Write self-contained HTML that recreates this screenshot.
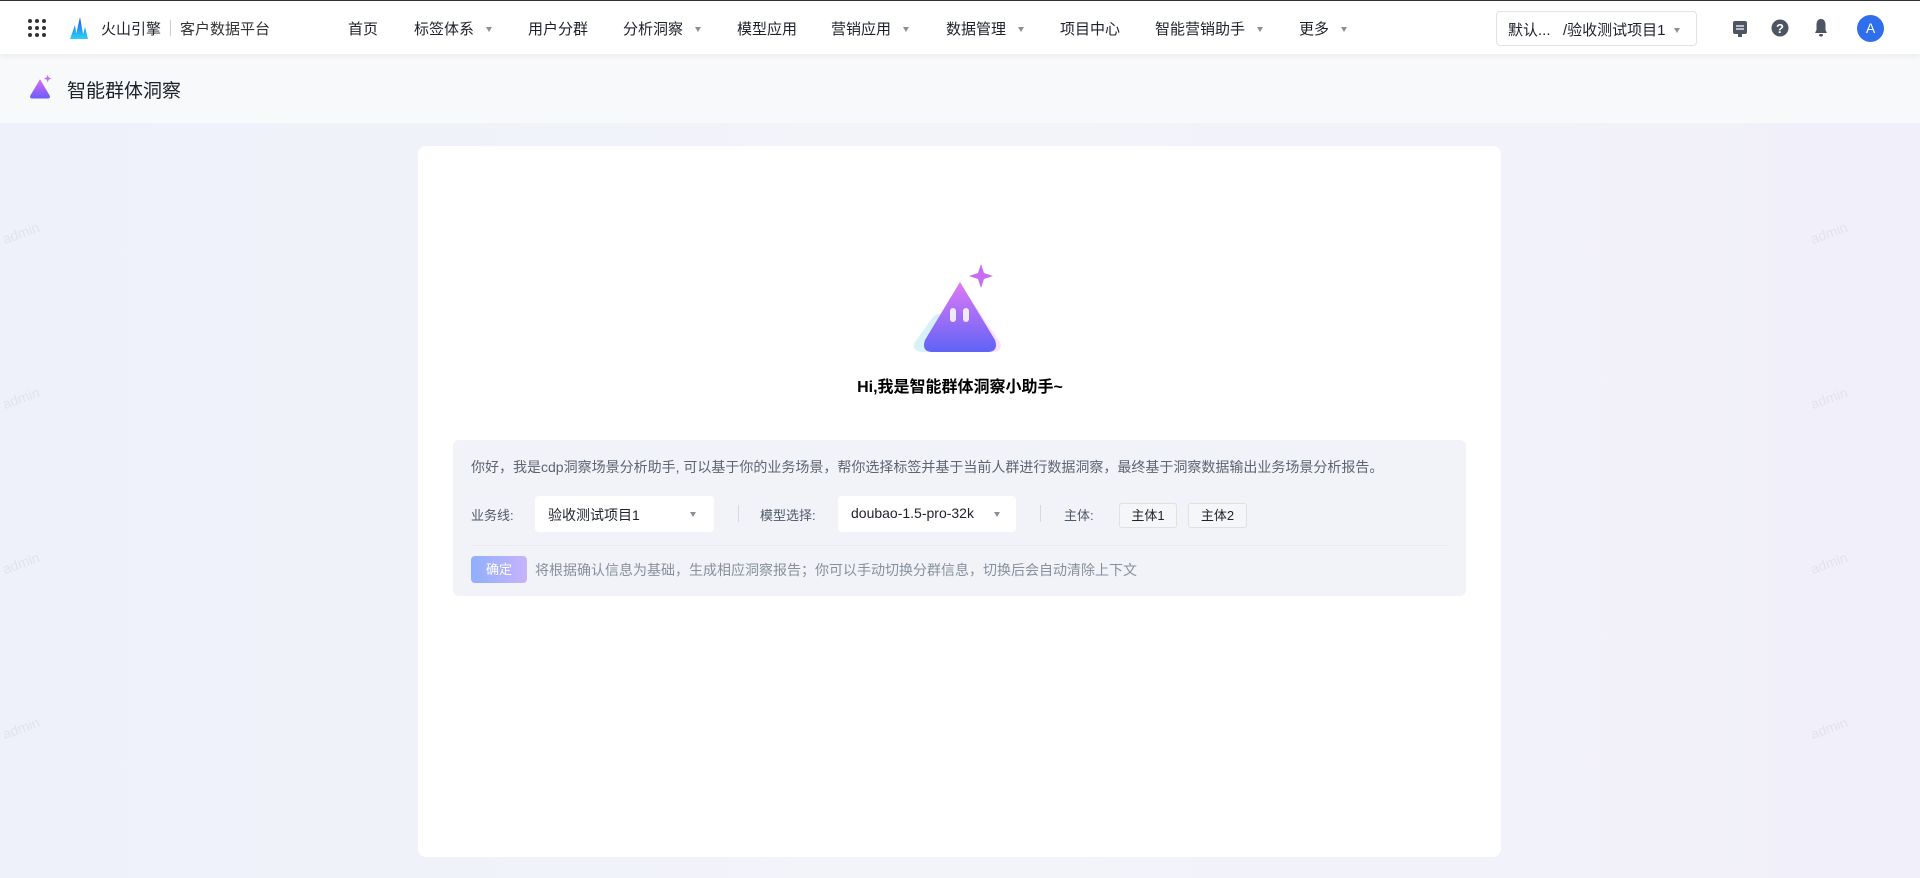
<!DOCTYPE html>
<html><head><meta charset="utf-8"><style>
*{margin:0;padding:0;box-sizing:border-box}
body{width:1920px;height:878px;overflow:hidden;font-family:"Liberation Sans","Noto Sans CJK SC",sans-serif;background:linear-gradient(90deg,#eef1fa,#f3f4fa 50%,#f1f0fa);position:relative;color:#1d2129}
.top{position:absolute;left:0;top:0;width:1920px;height:54px;background:#fff;border-top:1px solid #333;box-shadow:0 2px 6px rgba(0,0,0,.06);z-index:2}
.sub{position:absolute;left:0;top:54px;width:1920px;height:69px;background:#f8f9fb}
.abs{position:absolute;white-space:nowrap}
.nav{font-size:15px;color:#1d2129;top:17px}
.tri{display:inline-block;width:0;height:0;border-left:3.5px solid transparent;border-right:3.5px solid transparent;border-top:5px solid #8a8f99;margin-left:12px;vertical-align:2px}
.card{position:absolute;left:418px;top:146px;width:1083px;height:711px;background:#fff;border-radius:8px}
.box{position:absolute;left:453px;top:440px;width:1013px;height:156px;background:#f2f3f8;border-radius:6px}
.sel{position:absolute;background:#fff;border-radius:4px;height:36px;top:496px;font-size:14px;padding:9px 13px;color:#1d2129}
.lbl{font-size:13px;color:#4e5969;top:505px}
.tag{position:absolute;top:503px;height:25px;border:1px solid #dfe1e6;border-radius:3px;background:#f5f6f8;font-size:13px;line-height:23px;text-align:center}
.wm{position:absolute;color:rgba(0,0,0,.06);font-size:14px;transform:rotate(-20deg)}
</style></head><body>
<div class="top">
 <svg class="abs" style="left:28px;top:18px" width="18" height="18"><g fill="#333"><circle cx="2" cy="2" r="2"/><circle cx="9" cy="2" r="2"/><circle cx="16" cy="2" r="2"/><circle cx="2" cy="9" r="2"/><circle cx="9" cy="9" r="2"/><circle cx="16" cy="9" r="2"/><circle cx="2" cy="16" r="2"/><circle cx="9" cy="16" r="2"/><circle cx="16" cy="16" r="2"/></g></svg>
 <svg class="abs" style="left:70px;top:16px" width="18" height="22"><defs><linearGradient id="lg" x1="0" y1="0" x2="0" y2="1"><stop offset="0" stop-color="#1a55e8"/><stop offset="1" stop-color="#2ed1f5"/></linearGradient></defs><path d="M0 22L5 8 7 22ZM5 22L10 0 14 22ZM12 22L15 10 18 22Z" fill="url(#lg)"/></svg>
 <div class="abs" style="left:101px;top:17px;font-size:15px">火山引擎</div>
 <div class="abs" style="left:170px;top:19px;width:1px;height:16px;background:#ccc"></div>
 <div class="abs" style="left:180px;top:17px;font-size:15px;color:#333">客户数据平台</div>
 <div class="abs nav" style="left:348px">首页</div>
 <div class="abs nav" style="left:414px">标签体系<span class="tri"></span></div>
 <div class="abs nav" style="left:528px">用户分群</div>
 <div class="abs nav" style="left:623px">分析洞察<span class="tri"></span></div>
 <div class="abs nav" style="left:737px">模型应用</div>
 <div class="abs nav" style="left:831px">营销应用<span class="tri"></span></div>
 <div class="abs nav" style="left:946px">数据管理<span class="tri"></span></div>
 <div class="abs nav" style="left:1060px">项目中心</div>
 <div class="abs nav" style="left:1155px">智能营销助手<span class="tri"></span></div>
 <div class="abs nav" style="left:1299px">更多<span class="tri"></span></div>
 <div class="abs" style="left:1496px;top:10px;width:201px;height:35px;border:1px solid #e0e2e7;border-radius:4px;font-size:15px;padding:7px 0 0 11px">默认...&nbsp;&nbsp;&nbsp;/验收测试项目1<span class="tri" style="margin-left:8px"></span></div>
 <svg class="abs" style="left:1732px;top:19px" width="16" height="18"><rect x="1" y="1" width="14" height="13" rx="2" fill="#4e5562"/><rect x="6" y="14" width="4" height="3" fill="#4e5562"/><path d="M4 6h8M4 9h8" stroke="#fff" stroke-width="1.3"/></svg>
 <svg class="abs" style="left:1771px;top:18px" width="18" height="18"><circle cx="9" cy="9" r="8.5" fill="#4e5562"/><text x="9" y="14" font-size="13" font-weight="bold" fill="#fff" text-anchor="middle" font-family="Liberation Sans">?</text></svg>
 <svg class="abs" style="left:1813px;top:17px" width="16" height="20"><path d="M8 1C4.5 1 3.5 4 3.5 7v5L2 15h12l-1.5-3V7C12.5 4 11.5 1 8 1z" fill="#4e5562"/><rect x="6" y="16" width="4" height="2.5" rx="1.2" fill="#4e5562"/></svg>
 <div class="abs" style="left:1857px;top:14px;width:27px;height:27px;border-radius:50%;background:#2f6fec;color:#fff;font-size:14px;text-align:center;line-height:27px">A</div>
</div>
<div class="sub">
 <svg class="abs" style="left:26px;top:20px" width="28" height="28" viewBox="0 0 80 80"><defs><linearGradient id="m" x1="0" y1="0" x2="0" y2="1"><stop offset="0" stop-color="#d96cf5"/><stop offset="1" stop-color="#6a5cf8"/></linearGradient></defs><path d="M40 15L68 62Q70 70 62 70H18Q10 70 12 62Z" fill="url(#m)"/><path d="M62 2L65 10 73 13 65 16 62 24 59 16 51 13 59 10Z" fill="#c46cf2"/></svg>
 <div class="abs" style="left:67px;top:22px;font-size:19px;color:#1d2129">智能群体洞察</div>
</div>
<div class="wm" style="left:2px;top:225px">admin</div><div class="wm" style="left:2px;top:390px">admin</div><div class="wm" style="left:2px;top:555px">admin</div><div class="wm" style="left:2px;top:720px">admin</div>
<div class="wm" style="left:1810px;top:225px">admin</div><div class="wm" style="left:1810px;top:390px">admin</div><div class="wm" style="left:1810px;top:555px">admin</div><div class="wm" style="left:1810px;top:720px">admin</div>
<div class="card"></div>
<svg class="abs" style="left:905px;top:262px" width="110" height="100" viewBox="0 0 110 100"><defs><linearGradient id="g1" x1="0" y1="0" x2="0" y2="1"><stop offset="0" stop-color="#e07af5"/><stop offset="1" stop-color="#5f63f7"/></linearGradient></defs>
<path d="M10 80L28 55Q35 48 40 56L50 90H16Q6 88 10 80Z" fill="#cdeefa" opacity=".8"/>
<path d="M66 38L95 80Q98 90 88 90H60Z" fill="#fbe0fb"/>
<path d="M55 20L90 78Q94 90 82 90H28Q16 90 20 78Z" fill="url(#g1)"/>
<rect x="45" y="46" width="6" height="14" rx="3" fill="#fff" opacity=".85"/><rect x="58" y="46" width="6" height="14" rx="3" fill="#fff" opacity=".85"/>
<path d="M76 2L79 11 88 14 79 17 76 26 73 17 64 14 73 11Z" fill="#c86cf3"/></svg>
<div class="abs" style="left:0;width:1920px;text-align:center;top:373px;font-size:16px;font-weight:bold;color:#000">Hi,我是智能群体洞察小助手~</div>
<div class="box"></div>
<div class="abs" style="left:471px;top:457px;font-size:14px;color:#5c6470">你好，我是cdp洞察场景分析助手, 可以基于你的业务场景，帮你选择标签并基于当前人群进行数据洞察，最终基于洞察数据输出业务场景分析报告。</div>
<div class="abs lbl" style="left:471px">业务线:</div>
<div class="sel" style="left:535px;width:179px">验收测试项目1<span class="tri" style="position:absolute;right:18px;top:16px"></span></div>
<div class="abs" style="left:738px;top:505px;width:1px;height:17px;background:#d5d8de"></div>
<div class="abs lbl" style="left:760px">模型选择:</div>
<div class="sel" style="left:838px;width:178px">doubao-1.5-pro-32k<span class="tri" style="position:absolute;right:16px;top:16px"></span></div>
<div class="abs" style="left:1040px;top:505px;width:1px;height:17px;background:#d5d8de"></div>
<div class="abs lbl" style="left:1064px">主体:</div>
<div class="tag" style="left:1119px;width:58px">主体1</div>
<div class="tag" style="left:1188px;width:59px">主体2</div>
<div class="abs" style="left:471px;top:545px;width:978px;height:1px;background:#e8e9ef"></div>
<div class="abs" style="left:471px;top:556px;width:56px;height:27px;border-radius:4px;background:linear-gradient(90deg,#8fb0fb,#c8b2fb);color:#fff;font-size:13px;text-align:center;line-height:27px">确定</div>
<div class="abs" style="left:535px;top:560px;font-size:14px;color:#86909c">将根据确认信息为基础，生成相应洞察报告；你可以手动切换分群信息，切换后会自动清除上下文</div>
</body></html>
